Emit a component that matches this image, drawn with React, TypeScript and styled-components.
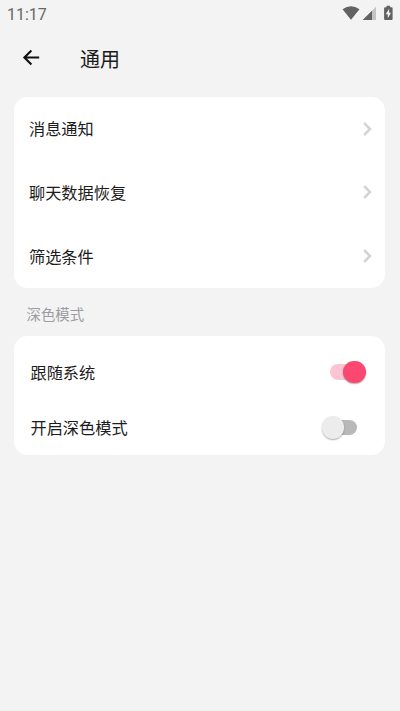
import React, { useState } from "react";
import styled, { createGlobalStyle } from "styled-components";

const GlobalStyle = createGlobalStyle`
  * { box-sizing: border-box; }
  body {
    margin: 0;
    background: #f3f3f3;
    font-family: "Noto Sans CJK SC", sans-serif;
    color: #1c1c1c;
  }
`;

const Screen = styled.main`
  width: 400px;
  height: 711px;
  overflow: hidden;
  background: #f3f3f3;
`;

const StatusBar = styled.header`
  display: flex;
  justify-content: space-between;
  height: 28px;
  padding: 0 6px 0 7px;
`;

const Clock = styled.span`
  font: 400 16px/29px Roboto, sans-serif;
  color: #666;
`;

const StatusIcons = styled.svg`
  display: block;
  width: 54px;
  height: 28px;
`;

const TitleBar = styled.nav`
  display: flex;
  align-items: center;
  height: 60px;
  padding-left: 20px;
`;

const BackButton = styled.button`
  display: flex;
  width: 22px;
  height: 22px;
  padding: 0;
  border: 0;
  background: none;
`;

const Title = styled.h1`
  margin: 1px 0 0 38px;
  font-size: 20px;
  font-weight: 400;
  line-height: 30px;
`;

const Card = styled.section`
  margin: 0 14.6px 0 14.4px;
  border-radius: 14px;
  background: #fff;
`;

const LinkCard = styled(Card)`
  margin-top: 9px;
  height: 191px;
`;

const SwitchCard = styled(Card)`
  height: 119px;
  padding-top: 8px;
`;

const Row = styled.div<{ $height: number }>`
  display: flex;
  align-items: center;
  justify-content: space-between;
  height: ${(p) => p.$height}px;
`;

const LinkRow = styled(Row)`
  padding: 0 13.4px 0 14.6px;
`;

const SwitchRow = styled(Row)`
  padding: 0 19.4px 0 16.1px;
`;

const Label = styled.span`
  font-size: 16.2px;
  line-height: 24px;
  margin-top: -1px;
`;

const SectionLabel = styled.h2`
  height: 48.4px;
  margin: 0;
  padding: 2px 0 0 26.5px;
  font-size: 14.4px;
  font-weight: 400;
  line-height: 48px;
  color: #9c9ca0;
`;

const Track = styled.button<{ $on: boolean }>`
  position: relative;
  width: 27px;
  height: 15.5px;
  margin-right: 9px;
  padding: 0;
  border: 0;
  border-radius: 8px;
  background: ${(p) => (p.$on ? "#fec4d1" : "#b8b8b8")};
`;

const Thumb = styled.span<{ $on: boolean }>`
  position: absolute;
  top: -3.6px;
  ${(p) => (p.$on ? "right: -8.5px;" : "left: -8.5px;")}
  width: 22.5px;
  height: 22.5px;
  border-radius: 50%;
  background: ${(p) => (p.$on ? "#fc4770" : "#ececec")};
  box-shadow: 0 1px 1.5px rgba(0, 0, 0, 0.32);
`;

function Chevron() {
  return (
    <svg width="10" height="16" viewBox="0 0 10 16" fill="none" stroke="#d4d4d4" strokeWidth="2.5">
      <path d="M2.100 2 8 8 2.100 14" />
    </svg>
  );
}

function Switch({ initial, label }: { initial: boolean; label: string }) {
  const [on, setOn] = useState(initial);
  return (
    <Track $on={on} role="switch" aria-checked={on} aria-label={label} onClick={() => setOn(!on)}>
      <Thumb $on={on} />
    </Track>
  );
}

const links = ["消息通知", "聊天数据恢复", "筛选条件"];
const switches = [
  { label: "跟随系统", on: true },
  { label: "开启深色模式", on: false },
];

export default function App() {
  return (
    <Screen>
      <GlobalStyle />
      <StatusBar>
        <Clock>11:17</Clock>
        <StatusIcons viewBox="340 0 54 28" fill="#626262">
          <path d="M342.5 9.3Q351 3.4 359.5 9.3L351 19.8Z" />
          <path d="M376 6.7V20H362.7Z" fill="#c4c4c4" />
          <path d="M372 10.7V20H362.7Z" />
          <path d="M386.5 5.7h3.6v1.5h1.500q1 0 1 1v10.7q0 1-1 1h-6.500q-1 0-1-1V8.200q0-1 1-1h1.400Z" />
          <path d="M389.100 8.700 385.800 14.300h2v4l3.200-5.600h-1.900Z" fill="#f3f3f3" />
        </StatusIcons>
      </StatusBar>
      <TitleBar>
        <BackButton aria-label="返回">
          <svg width="22" height="22" viewBox="0 0 22 22" fill="none" stroke="#111" strokeWidth="2.100">
            <path d="M19.200 10.500H4.500M11.400 3.600 4.400 10.500 11.400 17.400" />
          </svg>
        </BackButton>
        <Title>通用</Title>
      </TitleBar>
      <LinkCard>
        {links.map((text) => (
          <LinkRow key={text} $height={63.67}>
            <Label>{text}</Label>
            <Chevron />
          </LinkRow>
        ))}
      </LinkCard>
      <SectionLabel>深色模式</SectionLabel>
      <SwitchCard>
        {switches.map((item) => (
          <SwitchRow key={item.label} $height={55.5}>
            <Label>{item.label}</Label>
            <Switch initial={item.on} label={item.label} />
          </SwitchRow>
        ))}
      </SwitchCard>
    </Screen>
  );
}
